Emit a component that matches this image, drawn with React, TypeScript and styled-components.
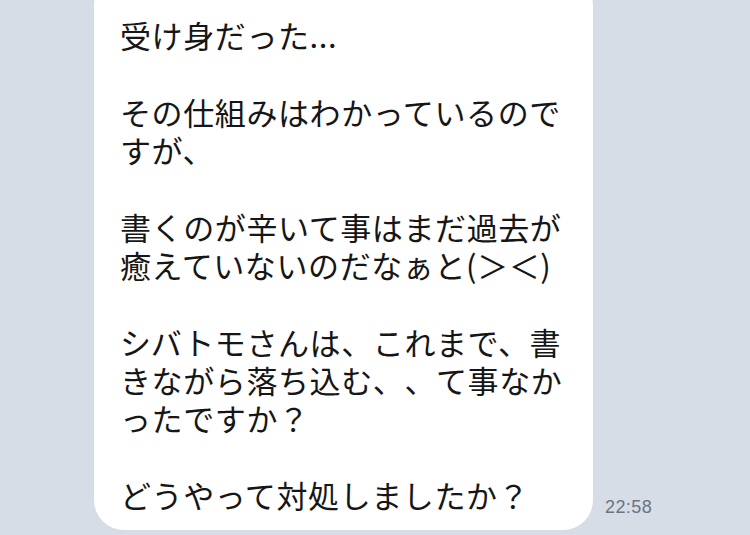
import styled, { createGlobalStyle } from "styled-components";

const GlobalStyle = createGlobalStyle`
  html, body {
    margin: 0;
    padding: 0;
    background: #d6dde6;
  }
`;

const Screen = styled.div`
  width: 750px;
  height: 535px;
  overflow: hidden;
  display: flex;
  flex-direction: column;
  justify-content: flex-end;
  background: #d6dde6;
  font-family: "Noto Sans CJK JP", "Noto Sans", sans-serif;
`;

const Row = styled.div`
  display: flex;
  align-items: flex-end;
  padding-left: 94px;
  gap: 12px;
`;

const Bubble = styled.div`
  width: 499px;
  box-sizing: border-box;
  padding: 40px 0 16px 26px;
  background: #ffffff;
  border-radius: 30px;
  color: #161616;
  font-size: 31px;
  letter-spacing: 0.6px;
  line-height: 38.3px;
  text-spacing-trim: space-all;
`;

const Paragraph = styled.div`
  & + & {
    margin-top: 38.3px;
  }
`;

const Line = styled.div`
  white-space: nowrap;
`;

const Time = styled.div`
  margin-bottom: 12px;
  font-family: "Liberation Sans", "Noto Sans", sans-serif;
  font-size: 18px;
  color: #6b7384;
  letter-spacing: 0.4px;
`;

const BottomRule = styled.div`
  height: 3px;
  margin-top: 5px;
  background: #b9c0ca;
`;

const paragraphs = [
  ["受け身だった..."],
  ["その仕組みはわかっているので", "すが、"],
  ["書くのが辛いて事はまだ過去が", "癒えていないのだなぁと(＞＜)"],
  ["シバトモさんは、これまで、書", "きながら落ち込む、、て事なか", "ったですか？"],
  ["どうやって対処しましたか？"],
];

const App = () => {
  return (
    <>
      <GlobalStyle />
      <Screen>
        <Row>
          <Bubble>
            {paragraphs.map((lines, i) => (
              <Paragraph key={i}>
                {lines.map((l, j) => (
                  <Line key={j}>{l}</Line>
                ))}
              </Paragraph>
            ))}
          </Bubble>
          <Time>22:58</Time>
        </Row>
        <BottomRule />
      </Screen>
    </>
  );
};

export default App;
